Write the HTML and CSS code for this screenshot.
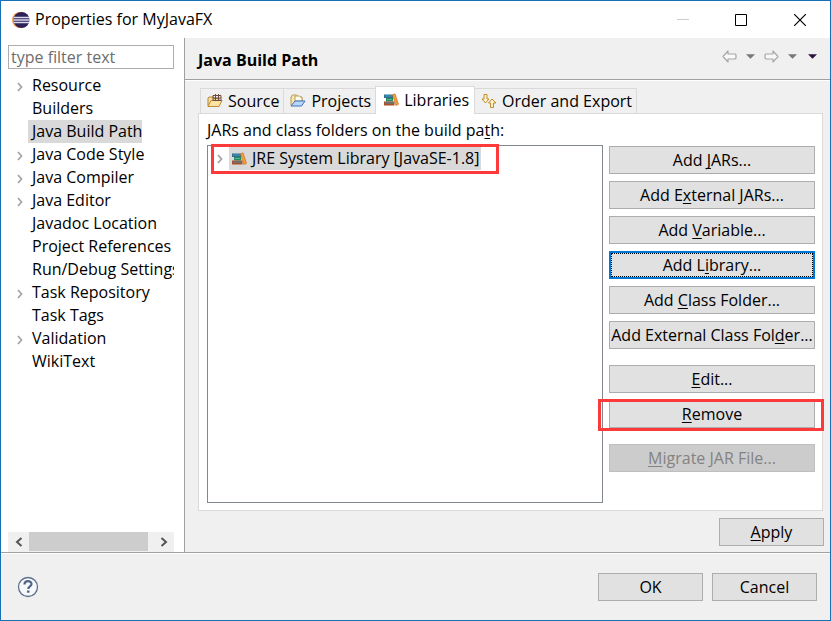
FILE: index.html
```html
<!DOCTYPE html>
<html lang="en">
<head>
<meta charset="utf-8">
<title>Properties for MyJavaFX</title>
<link rel="stylesheet" href="styles.css">
</head>
<body>
<svg class="defs" aria-hidden="true">
  <symbol id="books" viewBox="0 0 16 14">
    <path d="M1 1.500h9v3.500H1z" fill="#2b6f94"/><path d="M2 3h7" stroke="#4fa0b8"/>
    <path d="M3 5h7v3.500H3z" fill="#238a62"/><path d="M4 6.500h5" stroke="#4cb88c"/>
    <path d="M1 8.500h10.500v4H1z" fill="#a8502a"/><path d="M2 10h9" stroke="#3d8caa"/>
    <path d="M9.500 2l2.500-1.200 3.500 10.500-2.600 1.200z" fill="#f0a03c" stroke="#c8701c" stroke-width=".7"/>
  </symbol>
  <symbol id="chevron" viewBox="0 0 6 10"><path d="M1 1l3.500 4L1 9" fill="none" stroke="#a6a6a6" stroke-width="1.800"/></symbol>
  <symbol id="arrow" viewBox="0 0 15 13"><path d="M1 6.500l5-5.500v3h7l1 1v3l-1 1H6v3z" fill="#f8f8f8" stroke="#a8a8a8" stroke-width="1.200" stroke-linejoin="round"/></symbol>
  <symbol id="drop" viewBox="0 0 10 5"><path d="M0 0h10L5 5z" fill="currentColor"/></symbol>
</svg>
<div class="window">
  <header class="titlebar">
    <svg class="logo" viewBox="0 0 18 18" aria-hidden="true"><circle cx="8" cy="9" r="8" fill="#f0a04b"/><circle cx="9.500" cy="9" r="8" fill="#2c2255"/><path d="M2 6.500h15M1.500 9h16M2 11.500h15" stroke="#dcdaf0" stroke-width="1.400"/></svg>
    <h1>Properties for MyJavaFX</h1>
    <div class="controls">
      <button aria-label="Minimize"><svg viewBox="0 0 12 12"><path d="M0 5.500h12" stroke="#ccc"/></svg></button>
      <button aria-label="Maximize"><svg viewBox="0 0 12 12"><path d="M.5.5h11v11H.5z" fill="none" stroke="#000"/></svg></button>
      <button aria-label="Close"><svg viewBox="0 0 12 12"><path d="M0 0l12 12M12 0L0 12" stroke="#000" stroke-width="1.200"/></svg></button>
    </div>
  </header>
  <div class="body">
    <nav class="sidebar">
      <input class="filter" type="text" placeholder="type filter text" aria-label="Filter">
      <ul class="tree">
        <li><svg class="chev"><use href="#chevron"/></svg><a href="#">Resource</a></li>
        <li><a href="#">Builders</a></li>
        <li><a href="#" class="selected">Java Build Path</a></li>
        <li><svg class="chev"><use href="#chevron"/></svg><a href="#">Java Code Style</a></li>
        <li><svg class="chev"><use href="#chevron"/></svg><a href="#">Java Compiler</a></li>
        <li><svg class="chev"><use href="#chevron"/></svg><a href="#">Java Editor</a></li>
        <li><a href="#">Javadoc Location</a></li>
        <li><a href="#">Project References</a></li>
        <li><a href="#">Run/Debug Settings</a></li>
        <li><svg class="chev"><use href="#chevron"/></svg><a href="#">Task Repository</a></li>
        <li><a href="#">Task Tags</a></li>
        <li><svg class="chev"><use href="#chevron"/></svg><a href="#">Validation</a></li>
        <li><a href="#">WikiText</a></li>
      </ul>
      <div class="scrollbar">
        <button aria-label="Scroll left"><svg viewBox="0 0 8 10"><path d="M6.500 1L2 5l4.500 4" fill="none" stroke="#555" stroke-width="2"/></svg></button>
        <div class="track"><div class="thumb"></div></div>
        <button aria-label="Scroll right"><svg viewBox="0 0 8 10"><path d="M1.500 1L6 5 1.500 9" fill="none" stroke="#555" stroke-width="2"/></svg></button>
      </div>
    </nav>
    <main class="content">
      <div class="heading">
        <h2>Java Build Path</h2>
        <div class="history">
          <button aria-label="Back"><svg class="arrow"><use href="#arrow"/></svg></button>
          <button aria-label="Back history"><svg class="drop"><use href="#drop"/></svg></button>
          <button aria-label="Forward"><svg class="arrow forward"><use href="#arrow"/></svg></button>
          <button aria-label="Forward history"><svg class="drop"><use href="#drop"/></svg></button>
          <button aria-label="Menu"><svg class="drop menu"><use href="#drop"/></svg></button>
        </div>
      </div>
      <div class="page">
        <div class="tabs" role="tablist">
          <button role="tab"><svg class="icon" viewBox="0 0 16 14"><path d="M1 12V4l1-1h4l1 1.500h5V7" fill="#f8dfa0" stroke="#b98535"/><path d="M1 12.500l3-6h11l-3 6z" fill="#fbe3a4" stroke="#c08a35" stroke-linejoin="round"/><path d="M6 1.500h8v5H6zM6 4h8M8.500 0v7M11.500 0v7" fill="none" stroke="#6e4a3c"/></svg>Source</button>
          <button role="tab"><svg class="icon" viewBox="0 0 16 14"><path d="M1 11.500V3l1.500-2h4L8 3h4v4" fill="#f8e6ac" stroke="#b9974e"/><path d="M5 2h4.500L12 4.500V7H5z" fill="#fffdf0" stroke="#b9a060"/><path d="M1 12l4-5h10l-3.500 5z" fill="#b9d7f8" stroke="#3f6fc0" stroke-linejoin="round"/></svg>Projects</button>
          <button role="tab" aria-selected="true" class="active"><svg class="icon"><use href="#books"/></svg>Libraries</button>
          <button role="tab"><svg class="icon" viewBox="0 0 16 14"><g fill="#fff3c4" stroke="#c08c2c" stroke-linejoin="round"><path d="M3 .5h3V5h2L4.500 9 1 5h2z"/><path d="M9.500 13.500h3V9H15L11 5 7.500 9h2z"/></g></svg>Order and Export</button>
        </div>
        <section class="panel" role="tabpanel">
          <p class="caption">JARs and class folders on the build pa<u>t</u>h:</p>
          <div class="columns">
            <div class="list">
              <div class="entry marked">
                <svg class="chev"><use href="#chevron"/></svg>
                <span class="item"><svg class="icon"><use href="#books"/></svg>JRE System Library [JavaSE-1.8]</span>
              </div>
            </div>
            <div class="actions">
              <button class="btn">Add <u>J</u>ARs...</button>
              <button class="btn">Add E<u>x</u>ternal JARs...</button>
              <button class="btn">Add <u>V</u>ariable...</button>
              <button class="btn focused">Add L<u>i</u>brary...</button>
              <button class="btn">Add <u>C</u>lass Folder...</button>
              <button class="btn">Add External Class Fol<u>d</u>er...</button>
              <div class="group"><button class="btn"><u>E</u>dit...</button></div>
              <div class="marked"><button class="btn"><u>R</u>emove</button></div>
              <div class="group"><button class="btn" disabled><u>M</u>igrate JAR File...</button></div>
            </div>
          </div>
        </section>
        <div class="apply"><button class="btn"><u>A</u>pply</button></div>
      </div>
    </main>
  </div>
  <footer class="footer">
    <button class="help" aria-label="Help"><svg viewBox="0 0 22 22"><circle cx="11" cy="11" r="9.500" fill="#f7f8fa" stroke="#5d6f8e" stroke-width="1.300"/><path d="M7.500 8.500c0-4.500 7-4.200 7-.5 0 2.500-3.300 2.300-3.300 5" fill="none" stroke="#50648a" stroke-width="2.200"/><path d="M10 14.500h2.500v2.200H10z" fill="#50648a"/></svg></button>
    <button class="btn">OK</button>
    <button class="btn">Cancel</button>
  </footer>
</div>
</body>
</html>
```
FILE: styles.css
```css
* { box-sizing: border-box; }
body { margin: 0; font: 16px/23px "Open Sans", "Noto Sans", sans-serif; color: #000; }
button { font: inherit; color: inherit; margin: 0; padding: 0; border: 0; background: none; }
h1, h2, p, ul { margin: 0; padding: 0; font: inherit; }
a { color: inherit; text-decoration: none; }
svg { display: block; flex: none; }
u { text-decoration-thickness: 1px; text-underline-offset: 2px; text-decoration-skip-ink: none; }
.defs { position: absolute; width: 0; height: 0; }

.window { display: flex; flex-direction: column; min-height: 100vh; border: 1px solid #1870b4; background: #f0f0f0; }
.titlebar { display: flex; align-items: center; height: 37px; padding-left: 11px; background: #fff; }
.logo { width: 18px; height: 18px; margin-right: 5px; }
.controls { display: flex; margin-left: auto; }
.controls button { display: grid; place-items: center; width: 58px; height: 34px; }
.controls button:last-child { width: 60px; }
.controls svg { width: 12px; height: 12px; }

.body { display: flex; flex: 1; border-bottom: 1px solid #a0a0a0; }
.sidebar { display: flex; flex-direction: column; flex: none; width: 184px; padding: 7px 10px 0 7px; border-right: 1px solid #a0a0a0; background: #fff; }
.filter { width: 100%; height: 24px; padding: 0 2px; border: 1px solid #abadb3; border-radius: 0; font: inherit; outline: 0; }
.filter::placeholder { color: #6d6d6d; opacity: 1; }
.tree { margin-top: 5px; list-style: none; overflow: hidden; }
.tree li { display: flex; align-items: center; height: 23px; padding-left: 20px; white-space: nowrap; }
.tree a { padding: 0 4px; }
.tree .selected { padding-right: 0; }
.tree .chev { margin: 2px 5px 0 -11px; }
.chev { width: 6px; height: 10px; }
.selected, .item { background: #d9d9d9; }
.scrollbar { display: flex; height: 20px; margin-top: auto; background: #f0f0f0; }
.scrollbar button { display: grid; place-items: center; width: 21px; }
.scrollbar svg { width: 8px; height: 10px; }
.track { flex: 1; }
.thumb { width: 96%; height: 19px; background: #cdcdcd; }

.content { display: flex; flex-direction: column; flex: 1; min-width: 0; }
.heading { display: flex; align-items: center; height: 42px; padding: 0 13px; border-bottom: 1px solid #a0a0a0; }
.heading h2 { font-weight: 700; padding-top: 4px; }
.history { display: flex; align-items: center; gap: 9px; margin: -4px 0 0 auto; }
.arrow { width: 15px; height: 13px; }
.forward { transform: scaleX(-1); }
.drop { width: 9px; height: 5px; color: #777; }
.drop.menu { margin-left: 2px; color: #2b123f; }

.page { display: flex; flex-direction: column; flex: 1; padding: 5px 6px 6px 13px; border-top: 1px solid #fff; }
.tabs { display: flex; align-items: flex-end; padding-left: 2px; }
.tabs button { display: flex; align-items: center; gap: 5px; height: 25px; padding: 0 4px 0 6px; border: 1px solid #dadada; border-bottom: 0; margin-right: -1px; white-space: nowrap; }
.tabs .active { position: relative; height: 28px; margin: 0 -1px -1px 0; padding: 0 5px 1px 7px; background: #fff; }
.icon { width: 16px; height: 14px; }
.panel { display: flex; flex-direction: column; flex: 1; margin-right: 1px; padding: 5px 7px 7px 8px; border: 1px solid #dadada; background: #fff; }
.caption { height: 26px; }
.columns { display: flex; flex: 1; gap: 6px; }
.list { flex: 1; border: 1px solid #828790; }
.entry { display: flex; align-items: center; width: max-content; max-width: 100%; height: 23px; margin: 1px 0 0 9px; position: relative; }
.item { display: flex; align-items: center; gap: 5px; margin-left: 6px; padding: 0 2px; white-space: nowrap; }
.actions { display: flex; flex-direction: column; gap: 7px; width: 206px; padding-top: 1px; }
.group { margin-top: 9px; }
.btn { width: 105px; height: 28px; border: 1px solid #adadad; background: #e1e1e1; white-space: nowrap; }
.actions .btn { display: block; width: 100%; }
.btn:disabled { background: #ccc; border-color: #bfbfbf; color: #838383; }
.focused { border: 2px solid #0078d7; outline: 1px dotted #000; outline-offset: -3px; }

/* Highlight frames drawn over the surrounding controls */
.marked { position: relative; }
.marked::after { content: ""; position: absolute; inset: -1px -9px -3px -11px; border: 3px solid #fc3a3a; pointer-events: none; }
.entry.marked::after { inset: -3px -18px -4px -6px; }

.apply { display: flex; justify-content: flex-end; padding-top: 7px; }
.footer { display: flex; align-items: center; gap: 9px; height: 67px; padding: 0 13px 0 16px; border-top: 1px solid #fff; }
.help { margin-right: auto; }
.help svg { width: 22px; height: 22px; }
```
